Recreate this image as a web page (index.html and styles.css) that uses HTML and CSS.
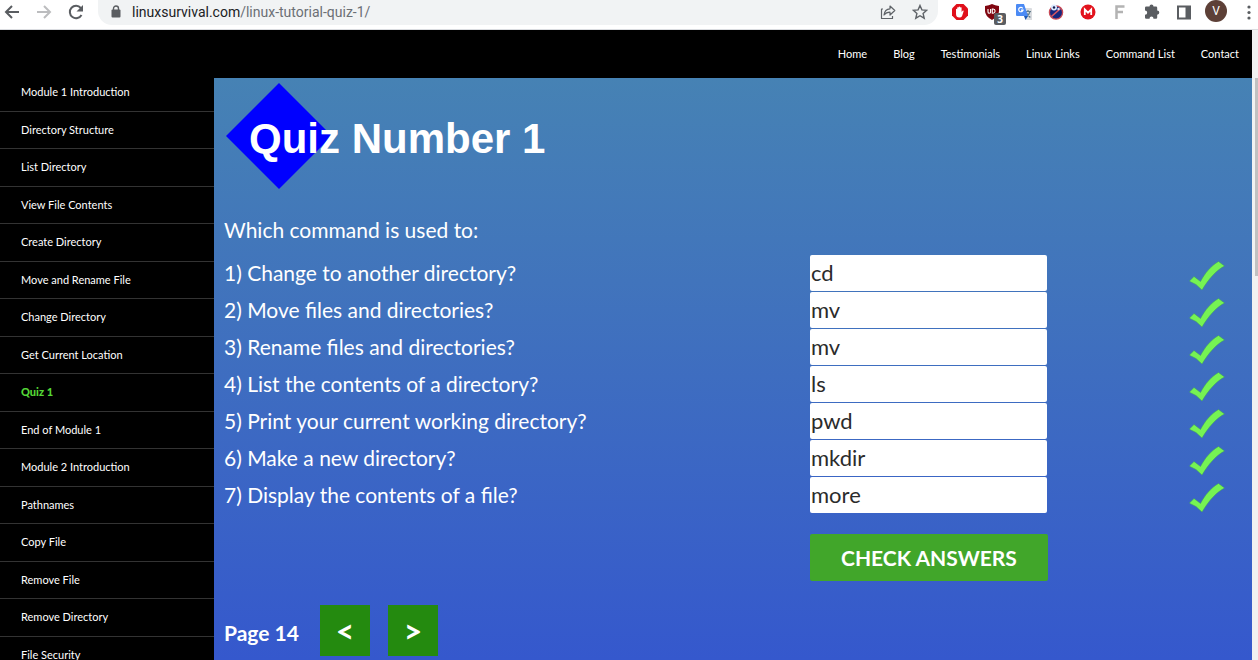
FILE: index.html
```html
<!DOCTYPE html>
<html lang="en">
<head>
<meta charset="utf-8">
<meta name="viewport" content="width=device-width, initial-scale=1">
<title>Linux Survival - Quiz Number 1</title>
<link rel="stylesheet" href="styles.css">
</head>
<body>
<svg class="defs" width="0" height="0" aria-hidden="true">
  <symbol id="tick" viewBox="0 0 36 30">
    <path d="M0.500 20 5 15.500 11.500 20.500C16 12 22 5 29.500 0.500L35.500 5C27 9.500 20 17.500 13 29L7 23.500 1.500 20.800Z" fill="#76f353" stroke="#3fa05a" stroke-width="0.5"/>
  </symbol>
</svg>

<div class="browser-bar">
  <button class="bar-btn" aria-label="Back"><svg width="16" height="16" viewBox="0 0 16 16"><path d="M15 8H2M8 2 2 8l6 6" fill="none" stroke="#5a5d61" stroke-width="2"/></svg></button>
  <button class="bar-btn" aria-label="Forward"><svg width="16" height="16" viewBox="0 0 16 16"><path d="M1 8h13M8 2l6 6-6 6" fill="none" stroke="#bcbdbf" stroke-width="2"/></svg></button>
  <button class="bar-btn" aria-label="Reload"><svg width="16" height="16" viewBox="0 0 16 16"><path d="M13.500 11A6.200 6.200 0 1 1 12.800 4L14 5.500" fill="none" stroke="#5a5d61" stroke-width="2"/><path d="M15 1v6.500H8.500Z" fill="#5a5d61"/></svg></button>
  <div class="omnibox">
    <svg width="10" height="13" viewBox="0 0 10 13"><path d="M2.500 5V3.500a2.500 2.500 0 0 1 5 0V5" fill="none" stroke="#5a5d61" stroke-width="1.400"/><rect x="0.500" y="4.500" width="9" height="8" rx="1" fill="#5a5d61"/></svg>
    <span class="url"><span class="host">linuxsurvival.com</span>/linux-tutorial-quiz-1/</span>
    <button class="bar-btn" aria-label="Share"><svg width="16" height="16" viewBox="0 0 16 16"><path d="M3 5H1.500v9.500h11V12M4 11c.5-4 2.500-6 6-6.200V2l4.800 4.500L10 11V8.200C7.500 8.200 5.500 9 4 11Z" fill="none" stroke="#5f6368" stroke-width="1.200" stroke-linejoin="round"/></svg></button>
    <button class="bar-btn" aria-label="Bookmark"><svg width="16" height="16" viewBox="0 0 16 16"><path d="m8 1.500 1.900 4.400 4.800.4-3.600 3.200 1.100 4.700L8 11.700l-4.200 2.500 1.100-4.700L1.300 6.300l4.800-.4Z" fill="none" stroke="#5f6368" stroke-width="1.400"/></svg></button>
  </div>
  <div class="extensions">
    <button class="bar-btn" aria-label="Ad blocker"><svg width="18" height="18" viewBox="0 0 18 18"><path d="M5.500 1h7L17 5.500v7L12.500 17h-7L1 12.500v-7Z" fill="#e0101b"/><path d="M5 9.500V6.200q.6-.8 1.200 0V4.600q.7-.9 1.400 0V4q.8-.9 1.500 0v.6q.8-.8 1.500 0V9l1.200-1.500q1-.3.900.6L11 13.200Q10.200 14.500 8.500 14.500 5 14.500 5 11Z" fill="#fff"/></svg></button>
    <button class="bar-btn shield" aria-label="uBlock Origin, 3 blocked"><svg width="18" height="18" viewBox="0 0 18 18"><path d="M9 1q3 1.500 7 2v5q0 5-7 9-7-4-7-9V3q4-.5 7-2Z" fill="#800610"/><path d="M5 6v3q0 1.300 1.300 1.300T7.600 9V6M9.300 6v4.300h.8q2-.3 2-2.200T10.100 6Z" fill="none" stroke="#fff" stroke-width="1.100"/></svg><span class="badge">3</span></button>
    <button class="bar-btn" aria-label="Translate"><svg width="18" height="18" viewBox="0 0 18 18"><path d="M7 5h9q1 0 1 1v11h-6Z" fill="#dadce0"/><path d="M10 8.500h6M13 7v1.500m2 0q-.8 3.500-4 5.500m.3-4 4 4.500" fill="none" stroke="#607d8b" stroke-width="1.200"/><path d="M2 1h7l4 12H2q-1 0-1-1V2q0-1 1-1Z" fill="#4b8af4"/><path d="m9 13h4l-2.500 4Z" fill="#1a57b5"/><path d="M7.800 5.400a2.200 2.200 0 1 0 .2 1.800H6" fill="none" stroke="#fff" stroke-width="1.200"/></svg></button>
    <button class="bar-btn" aria-label="Blocker"><svg width="18" height="18" viewBox="0 0 18 18"><circle cx="9" cy="9.500" r="6.600" fill="#16277f" stroke="#c84a56" stroke-width="1.300"/><path d="m4.500 13.500 9-8" stroke="#d85660" stroke-width="1.600"/><circle cx="7" cy="4.500" r="3" fill="#dbe9ff"/><circle cx="7" cy="4.500" r="1.200" fill="#111c50"/><circle cx="11.500" cy="6" r="1.200" fill="#dbe9ff"/></svg></button>
    <button class="bar-btn" aria-label="Mega"><svg width="18" height="18" viewBox="0 0 18 18"><circle cx="9" cy="9" r="7.500" fill="#e2131d"/><path d="M5.800 12V6.500L9 9.700 12.200 6.500V12" fill="none" stroke="#fff" stroke-width="1.800"/></svg></button>
    <button class="bar-btn" aria-label="Font finder"><svg width="18" height="18" viewBox="0 0 18 18"><path d="M5.500 16V3.500h8M5.500 9h6.500" fill="none" stroke="#b3b3b3" stroke-width="2.500"/></svg></button>
    <button class="bar-btn" aria-label="Extensions"><svg width="18" height="18" viewBox="0 0 18 18"><path d="M6.500 3.500a2 2 0 0 1 4 0H13q1.200 0 1.200 1.200v2.800a2 2 0 0 1 0 4.200v2.800q0 1.200-1.200 1.200H10.500q0-2.200-2-2.200t-2 2.200H3.200Q2 15.700 2 14.500v-2.700q2.200 0 2.200-2.100T2 7.600V4.700q0-1.200 1.200-1.200Z" fill="#5a5d61"/></svg></button>
    <button class="bar-btn" aria-label="Side panel"><svg width="18" height="18" viewBox="0 0 18 18"><path d="M3 3.500h12v12H3Z" fill="none" stroke="#5a5d61" stroke-width="2"/><path d="M10.500 3H16v13h-5.500Z" fill="#5a5d61"/></svg></button>
    <button class="avatar" aria-label="Profile">V</button>
    <button class="bar-btn menu" aria-label="Menu"><svg width="18" height="18" viewBox="0 0 18 18" fill="#5a5d61"><circle cx="9" cy="4" r="1.600"/><circle cx="9" cy="9.500" r="1.600"/><circle cx="9" cy="15" r="1.600"/></svg></button>
  </div>
</div>

<div class="viewport">
  <div class="page">
    <header class="site-header">
      <nav class="top-nav" aria-label="Site">
        <a href="#">Home</a><a href="#">Blog</a><a href="#">Testimonials</a><a href="#">Linux Links</a><a href="#">Command List</a><a href="#">Contact</a>
      </nav>
    </header>
    <div class="columns">
      <nav class="side-nav" aria-label="Lessons">
        <a href="#">Module 1 Introduction</a>
        <a href="#">Directory Structure</a>
        <a href="#">List Directory</a>
        <a href="#">View File Contents</a>
        <a href="#">Create Directory</a>
        <a href="#">Move and Rename File</a>
        <a href="#">Change Directory</a>
        <a href="#">Get Current Location</a>
        <a href="#" class="current" aria-current="page">Quiz 1</a>
        <a href="#">End of Module 1</a>
        <a href="#">Module 2 Introduction</a>
        <a href="#">Pathnames</a>
        <a href="#">Copy File</a>
        <a href="#">Remove File</a>
        <a href="#">Remove Directory</a>
        <a href="#">File Security</a>
      </nav>
      <main class="quiz">
        <h1 class="title"><svg class="diamond" width="106" height="106" viewBox="0 0 106 106" aria-hidden="true"><path d="M53 0 106 53 53 106 0 53Z" fill="#0000ff"/></svg><span class="title-text">Quiz Number 1</span></h1>
        <p class="lead">Which command is used to:</p>
        <form class="questions">
          <div class="row"><label for="q1">1) Change to another directory?</label><input id="q1" type="text" value="cd"><svg class="tick" width="36" height="30"><use href="#tick"/></svg></div>
          <div class="row"><label for="q2">2) Move files and directories?</label><input id="q2" type="text" value="mv"><svg class="tick" width="36" height="30"><use href="#tick"/></svg></div>
          <div class="row"><label for="q3">3) Rename files and directories?</label><input id="q3" type="text" value="mv"><svg class="tick" width="36" height="30"><use href="#tick"/></svg></div>
          <div class="row"><label for="q4">4) List the contents of a directory?</label><input id="q4" type="text" value="ls"><svg class="tick" width="36" height="30"><use href="#tick"/></svg></div>
          <div class="row"><label for="q5">5) Print your current working directory?</label><input id="q5" type="text" value="pwd"><svg class="tick" width="36" height="30"><use href="#tick"/></svg></div>
          <div class="row"><label for="q6">6) Make a new directory?</label><input id="q6" type="text" value="mkdir"><svg class="tick" width="36" height="30"><use href="#tick"/></svg></div>
          <div class="row"><label for="q7">7) Display the contents of a file?</label><input id="q7" type="text" value="more"><svg class="tick" width="36" height="30"><use href="#tick"/></svg></div>
          <div class="row actions"><button type="button" class="check">CHECK ANSWERS</button></div>
        </form>
        <div class="pager">
          <span class="page-label">Page 14</span>
          <button class="page-btn" aria-label="Previous page">&lt;</button>
          <button class="page-btn" aria-label="Next page">&gt;</button>
        </div>
      </main>
    </div>
  </div>
  <div class="scrollbar"><div class="thumb"></div></div>
</div>
</body>
</html>
```
FILE: styles.css
```css
* { box-sizing: border-box; }
body {
  margin: 0;
  height: 100vh;
  display: flex;
  flex-direction: column;
  overflow: hidden;
  background: #000;
  font-family: Lato, sans-serif;
}
button { border: 0; padding: 0; font-family: inherit; cursor: pointer; }
a { color: inherit; text-decoration: none; }
.defs { position: absolute; }

/* browser toolbar */
.browser-bar {
  flex: none;
  display: flex;
  align-items: flex-start;
  height: 30px;
  padding: 0 0 0 4px;
  background: #fff;
  border-bottom: 1px solid #dadce0;
}
.bar-btn {
  display: flex;
  align-items: center;
  justify-content: center;
  width: 32px;
  height: 23px;
  background: none;
}
.browser-bar > .bar-btn { justify-content: flex-start; }
.omnibox {
  flex: 1;
  display: flex;
  align-items: center;
  height: 25px;
  margin-left: -2px;
  padding: 0 2px 2px 13px;
  border-radius: 0 0 14px 14px;
  background: #f1f3f4;
}
.url {
  flex: 1;
  margin-left: 11px;
  font: 14px/20px Roboto, sans-serif;
  color: #6b6f74;
}
.host { color: #202124; }
.extensions { display: flex; margin-left: 6px; }
.shield { position: relative; }
.badge {
  position: absolute;
  left: 18px;
  top: 13px;
  width: 12px;
  height: 12px;
  border-radius: 2px;
  background: #5a5d61;
  color: #fff;
  font: bold 10px/12px "Open Sans", sans-serif;
}
.avatar {
  width: 22px;
  height: 22px;
  margin: 0 5px;
  border-radius: 50%;
  background: #5d4037;
  color: #fff;
  font: 12px/22px Roboto, sans-serif;
}
.menu { width: 26px; justify-content: flex-end; }

/* page */
.viewport { flex: 1; display: flex; min-height: 0; }
.page { flex: 1; display: flex; flex-direction: column; min-width: 0; }
.scrollbar { width: 6px; padding: 48px 0 0 3px; background: #f1f1f1; }
.thumb { height: 34%; background: #c1c1c1; }
.site-header { flex: none; height: 48px; padding: 0 13px; }
.top-nav {
  display: flex;
  justify-content: flex-end;
  gap: 26px;
  color: #fff;
  font-size: 11px;
  line-height: 48px;
}
.columns { flex: 1; display: flex; min-height: 0; }
.side-nav {
  flex: none;
  width: 214px;
  color: #fff;
  font-size: 11px;
  line-height: 18px;
}
.side-nav a {
  display: block;
  height: 38px;
  padding: 9px 21px;
  border-top: 1px solid #333;
}
.side-nav a:nth-child(even) { height: 37px; }
.side-nav a:first-child { height: 33px; padding-top: 5px; border-top: 0; }
.side-nav .current { color: #55d737; font-weight: 900; }

.quiz {
  flex: 1;
  min-width: 0;
  padding: 5px 10px;
  background: linear-gradient(#4682b4, #4174bc 35%, #3558cd);
  color: #fff;
  font-size: 21px;
  line-height: 36px;
}
.title {
  position: relative;
  margin: 0 2px;
  padding: 0 23px;
  font: bold 42px/112px "Liberation Sans", Arial, sans-serif;
}
.diamond { position: absolute; left: 0; top: 0; }
.title-text { position: relative; }
.lead { margin: 17px 0 7px; }
.row {
  display: grid;
  grid-template-columns: 1fr 237px 195px;
  margin-bottom: 1px;
}
.row input {
  width: 100%;
  height: 36px;
  padding: 0 1px;
  border: 0;
  border-radius: 2px;
  background: #fff;
  color: #2b2b2b;
  font: 22px/36px Lato, sans-serif;
}
.tick { justify-self: end; align-self: end; margin-right: 17px; }
.actions { padding-top: 20px; }
.check {
  grid-column: 2 / 4;
  justify-self: start;
  height: 47px;
  padding: 0 31px;
  border-radius: 2px;
  background: #41a62a;
  color: #fff;
  font-size: 21px;
  font-weight: 700;
}
.pager { display: flex; align-items: center; margin-top: 24px; font-weight: 700; }
.page-label { margin-right: 21px; padding-top: 4px; }
.page-btn {
  width: 50px;
  height: 51px;
  margin-right: 18px;
  background: #248a0f;
  color: #fff;
  font-size: 32px;
  font-weight: 700;
}
```
